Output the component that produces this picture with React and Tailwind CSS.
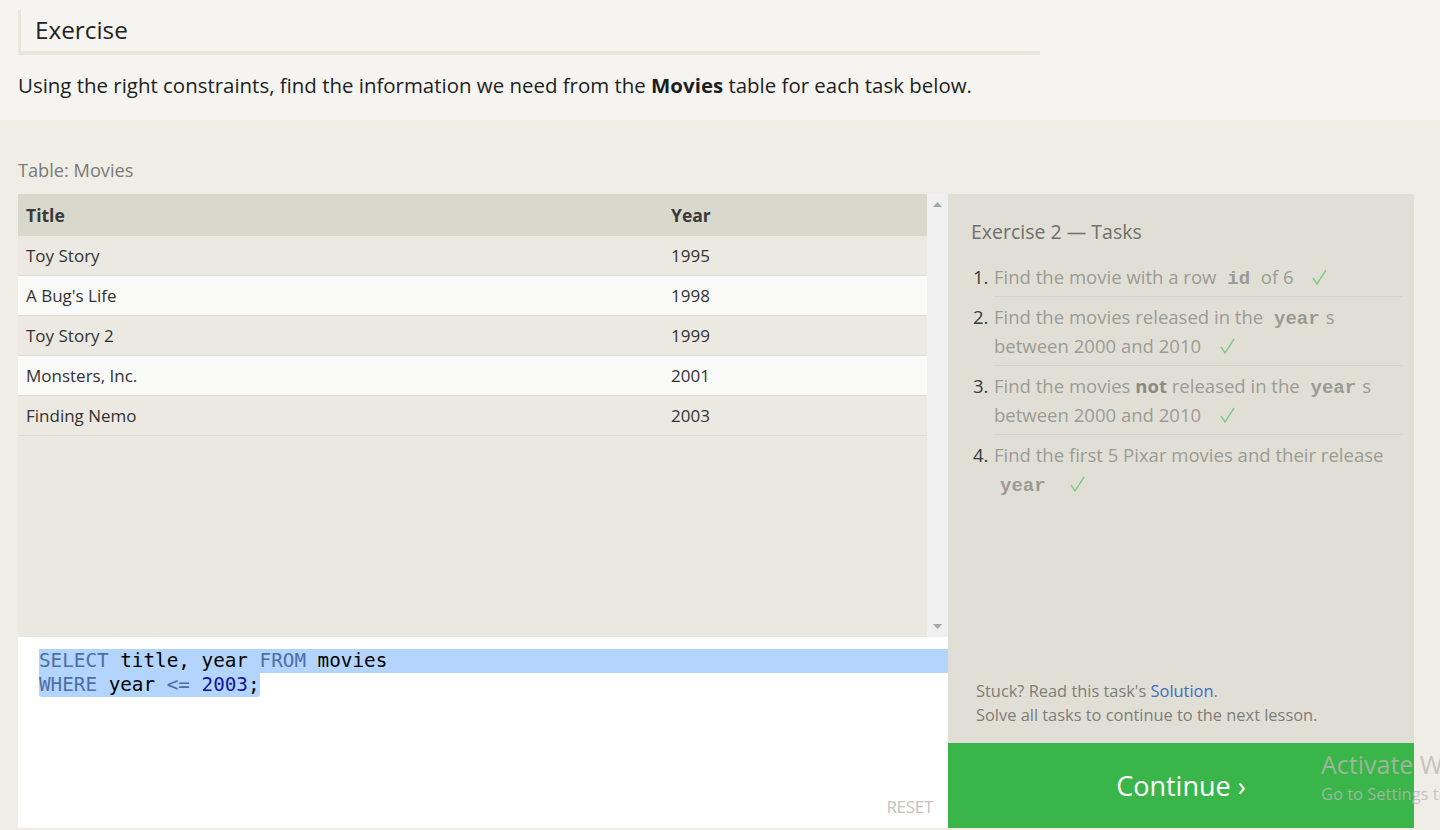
import React from "react";

const rows = [
  ["Toy Story", "1995"],
  ["A Bug's Life", "1998"],
  ["Toy Story 2", "1999"],
  ["Monsters, Inc.", "2001"],
  ["Finding Nemo", "2003"],
];

function Check() {
  return (
    <svg width="15" height="16" viewBox="0 0 15 16" className="inline-block ml-[14px] align-[-1px]">
      <polyline points="1,9 5,15 14,1" fill="none" stroke="#7fc98a" strokeWidth="1.4" />
    </svg>
  );
}

function Code({ children }) {
  return (
    <code
      className="px-[6px] font-bold text-[19px] leading-none text-[#9a9a95]"
      style={{ fontFamily: '"Liberation Mono", monospace' }}
    >
      {children}
    </code>
  );
}

function Task({ n, children, last }) {
  return (
    <li className="flex">
      <span className="w-[21px] shrink-0 text-[#3a3a3a]">{n}.</span>
      <div className={"flex-1 pb-[5px] mb-[5px] " + (last ? "" : "border-b border-[#d5d3c9]")}>{children}</div>
    </li>
  );
}

export default function App() {
  return (
    <div
      className="w-[1440px] h-[830px] overflow-hidden bg-[#efede6] relative"
      style={{ fontFamily: '"Open Sans", "Noto Sans", sans-serif' }}
    >
      <div className="bg-[#f5f4f0] h-[120px] pt-[10px] px-[18px]">
        <div className="w-[1022px] h-[45px] border-l-[3px] border-b-[4px] border-[#e7e5dc] pl-[14px] flex items-center text-[24.3px] text-[#222]">
          Exercise
        </div>
        <p className="mt-[16px] text-[20.45px] text-[#1e1e1e] leading-[28px]">
          Using the right constraints, find the information we need from the <b>Movies</b> table for each task below.
        </p>
      </div>

      <div className="px-[18px] pt-[38px]">
        <div className="text-[18.2px] text-[#7a7a76] h-[36px] leading-[24px]">Table: Movies</div>
        <div className="flex w-[1396px] h-[634px]">
          <div className="w-[930px] flex flex-col">
            <div className="h-[443px] flex bg-[#e9e8e1]">
              <div className="flex-1 text-[17px] text-[#333]">
                <div className="grid grid-cols-[645px_1fr] h-[42px] items-center bg-[#d9d8cd] px-[8px] font-bold text-[#3a3a3a] text-[17.5px]">
                  <span>Title</span>
                  <span>Year</span>
                </div>
                {rows.map((r, i) => (
                  <div
                    key={i}
                    className={
                      "grid grid-cols-[645px_1fr] h-[40px] items-center px-[8px] border-b border-[#dddbd3] " +
                      (i % 2 === 0 ? "bg-[#ebe9e2]" : "bg-[#f9f9f8]")
                    }
                  >
                    <span>{r[0]}</span>
                    <span>{r[1]}</span>
                  </div>
                ))}
              </div>
              <div className="w-[21px] bg-[#f0f0f0] flex flex-col justify-between items-center py-[8px]">
                <svg width="9" height="5" viewBox="0 0 9 5"><polygon points="0,5 9,5 4.5,0" fill="#a6a6a6" /></svg>
                <svg width="9" height="5" viewBox="0 0 9 5"><polygon points="0,0 9,0 4.5,5" fill="#a6a6a6" /></svg>
              </div>
            </div>
            <div className="flex-1 bg-white relative pt-[12px]" style={{ fontFamily: '"DejaVu Sans Mono", monospace' }}>
              <div className="text-[19.3px] leading-[24px] text-black">
                <div className="bg-[#b3d4fc] ml-[21px] whitespace-pre">
                  <span className="text-[#4d6fa6]">SELECT</span> title, year <span className="text-[#4d6fa6]">FROM</span> movies
                </div>
                <div className="ml-[21px] whitespace-pre inline-block bg-[#b3d4fc] rounded-br-[3px] rounded-bl-[3px]">
                  <span className="text-[#4d6fa6]">WHERE</span> year <span className="text-[#4d6fa6]">&lt;=</span> <span className="text-[#1414a0]">2003</span>;
                </div>
              </div>
              <div
                className="absolute right-[15px] bottom-[9px] text-[17px] text-[#c2c2c0] tracking-[-0.3px]"
                style={{ fontFamily: '"Open Sans", sans-serif' }}
              >
                RESET
              </div>
            </div>
          </div>

          <div className="w-[466px] flex flex-col">
            <div className="flex-1 bg-[#e1dfd5] pt-[24px] pl-[23px] pr-[12px] pb-[16px] flex flex-col">
              <div className="text-[19.5px] text-[#6f6f6c] leading-[28px]">Exercise 2 — Tasks</div>
              <ol className="mt-[16px] pl-[2px] text-[18.55px] leading-[29px] text-[#9b9b96]">
                <Task n={1}>
                  Find the movie with a row <Code>id</Code> of 6 <Check />
                </Task>
                <Task n={2}>
                  Find the movies released in the <Code>year</Code>s between 2000 and 2010 <Check />
                </Task>
                <Task n={3}>
                  Find the movies <b className="text-[#8a8a86]">not</b> released in the <Code>year</Code>s between 2000 and 2010 <Check />
                </Task>
                <Task n={4} last>
                  Find the first 5 Pixar movies and their release <Code>year</Code> <Check />
                </Task>
              </ol>
              <div className="mt-auto pl-[5px] text-[16.4px] leading-[24px] text-[#7d7d79]">
                <div>
                  Stuck? Read this task's <span className="text-[#3d6cc4]">Solution</span>.
                </div>
                <div>Solve all tasks to continue to the next lesson.</div>
              </div>
            </div>
            <div className="h-[85px] bg-[#3ab54a] flex items-center justify-center text-white text-[27px] pt-[2px]">
              Continue ›
            </div>
          </div>
        </div>
      </div>

      <div className="absolute left-[1321px] top-[752px] text-[#b8b8b3]/80 leading-none pointer-events-none whitespace-nowrap">
        <div className="text-[25px]">Activate Windows</div>
        <div className="text-[16.5px] mt-[9px]">Go to Settings to activate Windows.</div>
      </div>
    </div>
  );
}
